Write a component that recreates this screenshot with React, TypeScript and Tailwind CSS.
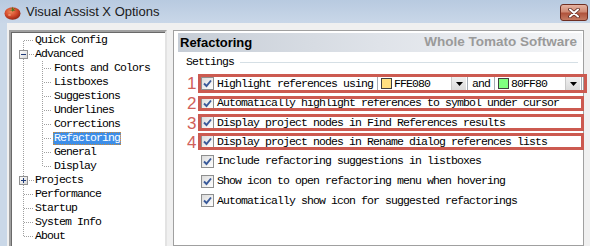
import React from "react";

type TreeItem = {
  label: string;
  level: 0 | 1;
  expander?: "-" | "+";
  first?: boolean;
  last?: boolean;
  lastChild?: boolean;
  selected?: boolean;
};

const tree: TreeItem[] = [
  { label: "Quick Config", level: 0, first: true },
  { label: "Advanced", level: 0, expander: "-" },
  { label: "Fonts and Colors", level: 1 },
  { label: "Listboxes", level: 1 },
  { label: "Suggestions", level: 1 },
  { label: "Underlines", level: 1 },
  { label: "Corrections", level: 1 },
  { label: "Refactoring", level: 1, selected: true },
  { label: "General", level: 1 },
  { label: "Display", level: 1, lastChild: true },
  { label: "Projects", level: 0, expander: "+" },
  { label: "Performance", level: 0 },
  { label: "Startup", level: 0 },
  { label: "System Info", level: 0 },
  { label: "About", level: 0, last: true },
];

const options = [
  "Automatically highlight references to symbol under cursor",
  "Display project nodes in Find References results",
  "Display project nodes in Rename dialog references lists",
  "Include refactoring suggestions in listboxes",
  "Show icon to open refactoring menu when hovering",
  "Automatically show icon for suggested refactorings",
];

// heights of rows 2..7 so the centres land where the dialog puts them
const rowHeights = ["h-[20px]", "h-[19px]", "h-[19px]", "h-[20px]", "h-[20px]", "h-[19px]"];

const dot = { stroke: "#a0a0a0", strokeDasharray: "1 1" };

function TreeGutter({ item }: { item: TreeItem }) {
  const width = item.level === 0 ? 23 : 42;
  return (
    <svg width={width} height={14} className="shrink-0">
      {/* root level vertical */}
      <line x1={12.5} x2={12.5} y1={item.first ? 8 : 0} y2={item.last ? 8 : 14} {...dot} />
      {item.level === 0 && !item.expander && <line x1={13} x2={22} y1={7.5} y2={7.5} {...dot} />}
      {item.expander && (
        <>
          <line x1={18} x2={23} y1={7.5} y2={7.5} {...dot} />
          <defs>
            <linearGradient id="exp" x1="0" y1="0" x2="1" y2="1">
              <stop offset="0" stopColor="#ffffff" />
              <stop offset="1" stopColor="#d6d6d6" />
            </linearGradient>
          </defs>
          <rect x={8.5} y={3.5} width={8} height={8} fill="url(#exp)" stroke="#919191" />
          <line x1={10} x2={15} y1={7.5} y2={7.5} stroke="#1f3a78" />
          {item.expander === "+" && <line x1={12.5} x2={12.5} y1={5} y2={10} stroke="#1f3a78" />}
        </>
      )}
      {item.level === 1 && (
        <>
          <line x1={31.5} x2={31.5} y1={0} y2={item.lastChild ? 8 : 14} {...dot} />
          <line x1={33} x2={41} y1={7.5} y2={7.5} {...dot} />
        </>
      )}
    </svg>
  );
}

function Tomato() {
  return (
    <svg width="17" height="15" viewBox="0 0 17 15">
      <defs>
        <radialGradient id="tom" cx="0.4" cy="0.35" r="0.7">
          <stop offset="0" stopColor="#f08a5a" />
          <stop offset="0.55" stopColor="#d2482a" />
          <stop offset="1" stopColor="#8c2410" />
        </radialGradient>
      </defs>
      <ellipse cx="8.5" cy="8.5" rx="8" ry="6.2" fill="url(#tom)" />
      <path d="M8.5 5 L6 2.5 L8 4 L8.5 1.5 L9.2 4 L11.5 2.8 L9.6 5 L12 6 L9 5.8 L8.5 7 L8 5.8 L5 6 Z" fill="#3f7a1e" />
      <ellipse cx="5.5" cy="10" rx="1.5" ry="1" fill="#f6b08c" opacity="0.6" />
    </svg>
  );
}

function CloseButton() {
  return (
    <div className="mt-[4px] mr-[2px] self-start w-[28px] h-[17px] rounded-[3px] border border-[#6e2e22] bg-[linear-gradient(to_bottom,#e6b3a2,#cf8a74_45%,#b0533c_55%,#c47a62)] flex items-center justify-center">
      <svg width="12" height="10" viewBox="0 0 12 10">
        <path d="M2 1.5 L10 8.5 M10 1.5 L2 8.5" stroke="#5a2a22" strokeWidth="3.6" strokeLinecap="round" />
        <path d="M2 1.5 L10 8.5 M10 1.5 L2 8.5" stroke="#ffffff" strokeWidth="2" strokeLinecap="round" />
      </svg>
    </div>
  );
}

function Checkbox() {
  return (
    <div className="w-[13px] h-[13px] shrink-0 border border-[#8e8f8f] bg-[linear-gradient(135deg,#dcdcdc,#ffffff)] flex items-center justify-center">
      <svg width="11" height="11" viewBox="0 0 11 11">
        <path d="M2 5.5 L4.5 8 L9 2.5" fill="none" stroke="#3a5a9a" strokeWidth="1.9" />
      </svg>
    </div>
  );
}

function ColorCombo({ color, label, width }: { color: string; label: string; width: string }) {
  return (
    <div className={`${width} h-[17px] border border-[#a5acb5] bg-white flex items-center`}>
      <div className="ml-[3px] w-[11px] h-[11px] border border-[#404040]" style={{ background: color }} />
      <span className="ml-[2px]">{label}</span>
      <div className="ml-auto mr-px w-[15px] h-[15px] bg-[linear-gradient(to_bottom,#f2f2f2,#d8d8d8)] border-l border-[#c8c8c8] flex items-center justify-center">
        <svg width="7" height="4" viewBox="0 0 7 4">
          <path d="M0 0 H7 L3.5 4 Z" fill="#000" />
        </svg>
      </div>
    </div>
  );
}

const redBoxes = [
  "left-[24px] top-[43px] w-[389px] h-[19px]",
  "left-[24px] top-[65px] w-[386px] h-[15px]",
  "left-[24px] top-[83px] w-[386px] h-[17px]",
  "left-[24px] top-[102px] w-[386px] h-[17px]",
];

const numbers = [
  { n: "1", pos: "top-[43px]" },
  { n: "2", pos: "top-[63px]" },
  { n: "3", pos: "top-[83px]" },
  { n: "4", pos: "top-[102px]" },
];

export default function App() {
  return (
    <div className="w-[590px] h-[246px] overflow-hidden bg-[#f0f0f0] flex flex-col font-['Liberation_Mono',monospace] text-[11.5px] tracking-[-0.9px] text-black">
      {/* title bar */}
      <div className="h-[23px] shrink-0 flex items-center bg-[linear-gradient(to_bottom,#b8cae0,#c9d7e8)]">
        <div className="ml-[4px] mt-px">
          <Tomato />
        </div>
        <span className="ml-[5px] font-['Liberation_Sans',Arial,sans-serif] text-[13px] tracking-normal text-[#1a1a1a]">
          Visual Assist X Options
        </span>
        <div className="ml-auto self-stretch flex">
          <CloseButton />
        </div>
      </div>

      <div className="flex flex-1">
        {/* left window frame */}
        <div className="w-[7px] shrink-0 bg-[#cad8e8]" />

        <div className="flex pt-[7px] pl-[2px]">
          {/* tree */}
          <div className="w-[158px] h-[230px] shrink-0 bg-white border-2 border-t-[#a0a0a0] border-l-[#a0a0a0] border-r-[#e3e3e3] border-b-[#e3e3e3] shadow-[inset_1px_1px_0_#696969] pt-px">
            {tree.map((item) => (
              <div key={item.label} className="h-[14px] flex items-center">
                <TreeGutter item={item} />
                <span
                  className={`h-[13px] flex items-center border leading-none whitespace-nowrap ${
                    item.selected
                      ? "bg-[#3d8ee8] text-white border-dotted border-[#c9893a]"
                      : "border-transparent"
                  }`}
                >
                  {item.label}
                </span>
              </div>
            ))}
          </div>

          {/* right page */}
          <div className="relative ml-[6px] w-[411px] h-[216px] shrink-0 border border-[#a0a0a0] bg-white">
            <div className="mt-[2px] ml-[4px] mr-px h-[19px] flex items-center justify-between bg-[linear-gradient(to_right,#c6cdd6,#dfe3e9_50%,#f4f5f7)] font-['Liberation_Sans',Arial,sans-serif] tracking-normal">
              <span className="ml-[2px] text-[13px] font-bold text-black">Refactoring</span>
              <span className="mr-[5px] text-[13.5px] font-bold text-[#9a9a9a]">Whole Tomato Software</span>
            </div>

            <div className="mt-[3px] ml-[12px] mr-[5px] h-[14px] flex items-center">
              <span>Settings</span>
              <div className="ml-[6px] flex-1 h-px bg-[#d5dfe5]" />
            </div>

            <div className="mt-[5px] ml-[27px] flex flex-col">
              <div className="h-[19px] flex items-center whitespace-nowrap">
                <Checkbox />
                <span className="ml-[3px]">Highlight references using</span>
                <div className="ml-[4px]">
                  <ColorCombo color="#ffe080" label="FFE080" width="w-[91px]" />
                </div>
                <span className="ml-[4px] w-[18px]">and</span>
                <div className="ml-[4px]">
                  <ColorCombo color="#80ff80" label="80FF80" width="w-[88px]" />
                </div>
              </div>
              {options.map((text, i) => (
                <div key={text} className={`${rowHeights[i]} flex items-center whitespace-nowrap`}>
                  <Checkbox />
                  <span className="ml-[3px]">{text}</span>
                </div>
              ))}
            </div>

            {/* annotation overlay */}
            {redBoxes.map((pos) => (
              <div key={pos} className={`absolute ${pos} border-[3px] border-[#cc5a50]`} />
            ))}
            {numbers.map(({ n, pos }) => (
              <div
                key={n}
                className={`absolute left-[13px] ${pos} h-[18px] flex items-center font-['Liberation_Sans',Arial,sans-serif] text-[17px] tracking-normal leading-none text-[#d0605a]`}
              >
                {n}
              </div>
            ))}
          </div>
        </div>
      </div>
    </div>
  );
}
